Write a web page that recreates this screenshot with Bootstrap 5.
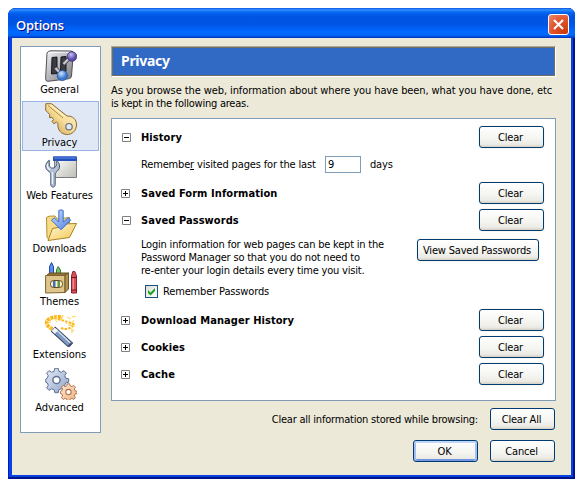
<!DOCTYPE html>
<html lang="en">
<head>
<meta charset="utf-8">
<title>Options</title>
<link href="https://cdn.jsdelivr.net/npm/bootstrap@5.3.0/dist/css/bootstrap.min.css" rel="stylesheet">
<style>
body{font:11px/13px "DejaVu Sans Condensed","DejaVu Sans",sans-serif;color:#000;background:#fff;letter-spacing:-.15px}
.window{width:567px;height:471px;margin:8px;background:#0842e0;border-radius:8px 7px 0 0;overflow:hidden;box-shadow:inset 1px 0 #0019cf,inset -2px 0 #00138c,inset 0 -2px #00138c}
.titlebar{height:30px;padding:3px 6px 0 8px;color:#fff;font:600 13px/16px "Open Sans","Noto Sans",sans-serif;letter-spacing:-.25px;text-shadow:1px 1px #0f1089;background:linear-gradient(#0958e0 0,#3593ff 2px,#1478f8 3px,#0561ee 5px,#0053e2 9px,#0054e6 16px,#0064fb 22px,#016afe 25px,#0060f0 28px,#0440cc 29px,#0038c0 30px)}
.close-btn{width:21px;height:21px;border:1px solid #fff;border-radius:3px;background:radial-gradient(circle at 85% 90%,#cc3a0a,#e2532e 55%,#ee8a6c);padding:0}
.client{margin:0 4px 4px;height:437px;background:#ece9d8;padding:8px 15px 0 8px}
.panes{width:81px;height:387px;background:#fff;border:1px solid #7f9db9;padding:1px;gap:3px}
.pane{height:50px;border:1px solid transparent;padding-top:1px;white-space:nowrap;letter-spacing:-.04px}
.pane span{margin:1px 2px 0 0}
.pane.active{background:#e0e8f6;border-color:#98b4e2}
.main-col{width:445px;margin-left:10px}
.heading-bar{height:31px;background:#316ac5;border:1px solid;border-color:#aca899 #fff #fff #aca899;box-shadow:inset 1px 1px #716f64,inset -1px -1px #716f64;color:#fff;font:700 14px/18px "Noto Sans","Open Sans",sans-serif;padding:0 0 1px 9px;letter-spacing:-.3px}
.intro{margin-top:7px;height:26px;letter-spacing:-.093px;white-space:nowrap}
.intro .l2{letter-spacing:-.24px}
.areas{height:283px;margin-top:8px;background:#fff;border:1px solid #7f9db9;padding:7px 11px 0 9px}
.area-row{height:22px}
.area-row b{margin-left:11px;letter-spacing:.07px}
.area-row.open .toggle{margin-left:1px}
.area-row.open b{margin-left:10px}
.area-row+.area-row{margin-top:5px}
.toggle{width:9px;height:9px;flex:none}
.xp-btn{width:65px;height:22px;border:1px solid #003c74;border-radius:3px;background:linear-gradient(#fff,#f4f4f0 60%,#ecebe5 86%,#d6d0c5);font:inherit;letter-spacing:-.18px;color:#000;padding:0 2px 0 0;line-height:13px;white-space:nowrap;box-shadow:0 0 0 1px #ece9d855}
.xp-btn.default{box-shadow:inset 0 2px #c0d6fb,inset 2px 0 #a5bff0,inset -2px 0 #a5bff0,inset 0 -2px #7396e2}
.wide{width:122px;margin:8px 5px 0 0}
.visits{margin:8px 0 9px 20px;height:17px;letter-spacing:-.16px}
.visits label{width:184px}
.num{width:36px;height:17px;border:1px solid #7f9db9;padding:0 0 0 2px;font:inherit;margin:0 9px 0 0;color:#000;border-radius:0}
.pw{height:78px;padding-left:20px}
.pw p{margin:7px 0 8px;letter-spacing:-.2px;line-height:13px;white-space:nowrap}
.tick{width:13px;height:13px;border:1px solid #1c5180;background:linear-gradient(135deg,#dcdcd7,#fff);margin:0 5px 0 4px}
.clear-all{margin:7px 1px 0 0}.clear-all span{letter-spacing:-.21px;margin-right:12px}
.actions{margin:10px 1px 0 0;gap:12px}
</style>
</head>
<body>
<svg width="0" height="0" class="position-absolute" aria-hidden="true"><defs>
<linearGradient id="steel" x2="1" y2="1"><stop stop-color="#f4f4f6"/><stop offset="1" stop-color="#74767e"/></linearGradient>
<linearGradient id="gold" x1="0" y1="1" x2="1" y2="0"><stop stop-color="#c08f3a"/><stop offset=".5" stop-color="#f6dc98"/><stop offset="1" stop-color="#fff6d4"/></linearGradient>
<linearGradient id="folder" x2="1" y2="1"><stop stop-color="#fffadb"/><stop offset="1" stop-color="#f2c54d"/></linearGradient>
<linearGradient id="sky" x2="1" y2="1"><stop stop-color="#cfe0ff"/><stop offset="1" stop-color="#4a7fe0"/></linearGradient>
<radialGradient id="blueBall" cx=".4" cy=".3"><stop stop-color="#cfe6ff"/><stop offset="1" stop-color="#3c78d4"/></radialGradient>
<radialGradient id="violetBall" cx=".4" cy=".3"><stop stop-color="#c8c0f4"/><stop offset="1" stop-color="#5c4ca8"/></radialGradient>
<linearGradient id="gearBlue" x2="1" y2="1"><stop stop-color="#e4ebf7"/><stop offset="1" stop-color="#8fa3c6"/></linearGradient>
<linearGradient id="gearTan" x2="1" y2="1"><stop stop-color="#ffe8d0"/><stop offset="1" stop-color="#efb083"/></linearGradient>
<linearGradient id="screen" x2="1" y2="1"><stop stop-color="#fff"/><stop offset="1" stop-color="#bdbdb4"/></linearGradient>
</defs></svg>
<div class="window">
  <div class="titlebar d-flex align-items-center justify-content-between"><span>Options</span>
    <button class="close-btn d-flex align-items-center justify-content-center" aria-label="Close"><svg width="13" height="13" viewBox="0 0 13 13"><path d="M2 2l9 9M11 2l-9 9" stroke="#fff" stroke-width="2.1"/></svg></button></div>
  <div class="client d-flex align-items-start">
    <nav class="panes d-flex flex-column">
      <div class="pane d-flex flex-column align-items-center"><svg width="32" height="32" viewBox="0 0 32 32"><path d="M2 3Q3 .8 6 .8L26 1q2.500 0 2.300 2.500L26.500 26q-.3 2.500-3 2.800L3 31.300Q.5 31.500.6 28.500Z" fill="url(#steel)" stroke="#505056"/><path d="M2.800 4Q4 2.300 7 2.300h18" fill="none" stroke="#fff" opacity=".8"/><path d="M7 7.500l5-.5v16.500l-5.500.5zM16 7l5-.5v15l-5.500 1z" fill="#3b3b43" stroke="#17171c"/><path d="M10.500 18l5.500 6M18.500 14l5-5" stroke="#4a4a52" stroke-width="4"/><path d="M10.500 18l5.500 6M18.500 14l5-5" stroke="#c8c8ce" stroke-width="2.200"/><circle cx="27" cy="6.500" r="4.800" fill="url(#violetBall)" stroke="#3e3577" stroke-width=".8"/><circle cx="17.300" cy="25.500" r="5.100" fill="url(#blueBall)" stroke="#24519c" stroke-width=".8"/></svg><span>General</span></div>
      <div class="pane active d-flex flex-column align-items-center"><svg width="32" height="32" viewBox="0 0 32 32"><path d="M.8.7h5.700l15.500 12.300c6-.2 9.700 3.700 9.500 9-.3 5.700-4.300 9.700-9.800 9.500-5.800-.3-9.400-4.800-8.800-11l-1.500-1.700-2.200 2.200-2.200-2.500 1.500-2-1.500-2.200-2.500.4.200-3-2-2.400L.7 7.500z" fill="url(#gold)" stroke="#8a6a2c"/><path d="M3 2.500l15 12.500" stroke="#b58c3c"/><path d="M5.500 2.200L20.500 14" stroke="#fff8da"/><circle cx="24" cy="23.700" r="3.200" fill="#e0e8f6" stroke="#666b78" stroke-width="1.200"/></svg><span>Privacy</span></div>
      <div class="pane d-flex flex-column align-items-center"><svg width="32" height="32" viewBox="0 0 32 32"><path d="M9.500 1.500h22v20h-22z" fill="url(#screen)" stroke="#777b86"/><path d="M8 1.200Q8 .3 9 .3h22q1 0 1 .9V5H8z" fill="#2450bd"/><path d="M9 2h22" stroke="#5c8cea"/><path d="M4.300 4.200C.7 6.300-.2 11 1.600 13.500c1.500 2 3.500 2.200 4.200 4.300v11c.2 3 4.200 3 4.400 0v-11c.7-2.400 3.300-2.800 4.100-5.500.8-3-.4-6.400-3.100-8.200V10L9 12H6.500L4.300 10z" fill="#b2c0d4" stroke="#475771"/><path d="M2.500 8c-.5 3 1 5 3 5.500M7.300 16v12" fill="none" stroke="#f0f5fc" stroke-width="1.200"/></svg><span>Web Features</span></div>
      <div class="pane d-flex flex-column align-items-center"><svg width="32" height="32" viewBox="0 0 32 32"><path d="M1.500 8.500L4 7.200l6-.2 2.500 3 12-1.500v9L5 31l-3-2.500z" fill="#f7dc85" stroke="#b28f36"/><path d="M7.500 19.500l8-1.500 3-3L31.500 14.500 24.500 28.500 3 31.500z" fill="url(#folder)" stroke="#ac8127"/><path d="M13.800 1.500q2.200-1.300 4.400 0V13l5-4.300 2.500 2.500L16 20.800 6.500 11.200l2.500-2.500 4.800 4.300z" fill="url(#sky)" stroke="#3e6fcf"/></svg><span>Downloads</span></div>
      <div class="pane d-flex flex-column align-items-center"><svg width="32" height="32" viewBox="0 0 32 32"><path d="M4.500 14V4.500L6.500 .5 8.500 4.500V14z" fill="#5b8de8" stroke="#1f49a6"/><path d="M11.500 15V8l1.700-3.500L15.500 8v7z" fill="#76c56f" stroke="#2f7e3b"/><path d="M1.500 13.500l3-2.500h19l-3 2.500z" fill="#8e7136" stroke="#66501f"/><path d="M.6 13.500H20v17L.6 31z" fill="#dec58b" stroke="#7e6431"/><path d="M20 13.500l3.500-2.500v16L20 30.500z" fill="#b19352" stroke="#705626"/><rect x="5.500" y="18.500" width="12" height="7" rx="3" fill="#fff0c3" stroke="#614b20"/><path d="M8 19h2.500v6H8z" fill="#416bc0"/><path d="M12.500 19H15v6h-2.500z" fill="#5b9a4e"/><path d="M26.500 31V14l1.300-4.500h2L31.500 14v17z" fill="#d8505a" stroke="#8c222b"/><path d="M26 15.500h6M26 28h6" stroke="#6e1720"/><path d="M28.200 16.500v11" stroke="#f2a1a5"/></svg><span>Themes</span></div>
      <div class="pane d-flex flex-column align-items-center"><svg width="32" height="32" viewBox="0 0 32 32"><g fill="none" stroke="#fbb417"><path d="M7.500 14C2 11.500-.5 7 3.500 4.500c4-2.500 9-3.500 14-2.200" stroke-width="3.600" stroke-dasharray="3 .8"/><path d="M13 4c6 2 12 3 17 6M16 13c5 2 9 .5 12-2" stroke-width="2" stroke-dasharray="2.500 1.200"/><path d="M3 2l3 4M1 9l5-2M4 15l3-4M11 0l1 5M18 0l-2 5M22 2l4 2M27 2l4-1M25 13l4 3M20 6l2 3M27 14v4M29 5l-4 5M9 3l3 4M23 10l7 1" stroke="#ffd047"/></g><path d="M8 14l18 16.500" stroke="#303d59" stroke-width="6.500"/><path d="M8.300 14.300l17.300 15.900" stroke="#7f99c2" stroke-width="4.600"/><path d="M10.300 13.800l16 15" stroke="#d3e0f4" stroke-width="1.300"/><path d="M8.300 14.300l3 2.800" stroke="#f4f7fc" stroke-width="4.400"/><path d="M24.300 29l1.400 1.300" stroke="#3d4f73" stroke-width="4.400"/></svg><span>Extensions</span></div>
      <div class="pane d-flex flex-column align-items-center"><svg width="32" height="32" viewBox="0 0 32 32"><path d="M9.300.8h3.400l.7 3 2.400 1 2.600-1.700 2.500 2.500-1.700 2.600 1 2.400 3 .7v3.400l-3 .7-1 2.400 1.700 2.600-2.500 2.500-2.600-1.700-2.400 1-.7 3H9.300l-.7-3-2.400-1-2.600 1.700-2.500-2.500 1.700-2.600-1-2.400-1.500-.5v-3.400l1.500-.9 1-2.400L1.100 5.600l2.500-2.500 2.600 1.700 2.400-1z" fill="url(#gearBlue)" stroke="#5d7095" transform="translate(.5 -.5)"/><circle cx="11.500" cy="12" r="3.600" fill="#fff" stroke="#62738f" stroke-width="1.500"/><g transform="translate(15.300 15.200) scale(.71)"><path d="M9.800.8h3.400l.7 3 2.400 1 2.600-1.700 2.500 2.500-1.700 2.600 1 2.400 3 .7v3.400l-3 .7-1 2.400 1.700 2.600-2.500 2.500-2.600-1.700-2.400 1-.7 3H9.800l-.7-3-2.400-1-2.600 1.700-2.500-2.500 1.700-2.600-1-2.400-2-.5v-3.400l2-.9 1-2.400L1.600 5.600l2.500-2.500 2.600 1.700 2.400-1z" fill="url(#gearTan)" stroke="#ad7048" stroke-width="1.300"/><circle cx="11.500" cy="12.500" r="3.800" fill="#fff" stroke="#ad7048" stroke-width="1.500"/></g></svg><span>Advanced</span></div>
    </nav>
    <main class="main-col d-flex flex-column">
      <div class="heading-bar d-flex align-items-center">Privacy</div>
      <div class="intro">As you browse the web, information about where you have been, what you have done, etc<br><span class="l2">is kept in the following areas.</span></div>
      <section class="areas">
        <div class="area-row open d-flex align-items-center"><svg class="toggle" viewBox="0 0 9 9"><path d="M.5.5h8v8h-8z" fill="#fff" stroke="#808080"/><path d="M2 4.500h5" stroke="#000"/></svg><b>History</b><button class="xp-btn ms-auto">Clear</button></div>
        <div class="visits d-flex align-items-center"><label for="days">Remembe<u>r</u> visited pages for the last</label><input class="num" id="days" value="9"><span>days</span></div>
        <div class="area-row d-flex align-items-center"><svg class="toggle" viewBox="0 0 9 9"><path d="M.5.5h8v8h-8z" fill="#fff" stroke="#808080"/><path d="M2 4.500h5M4.500 2v5" stroke="#000"/></svg><b>Saved Form Information</b><button class="xp-btn ms-auto">Clear</button></div>
        <div class="area-row open d-flex align-items-center"><svg class="toggle" viewBox="0 0 9 9"><path d="M.5.5h8v8h-8z" fill="#fff" stroke="#808080"/><path d="M2 4.500h5" stroke="#000"/></svg><b>Saved Passwords</b><button class="xp-btn ms-auto">Clear</button></div>
        <div class="pw d-flex justify-content-between align-items-start">
          <div><p>Login information for web pages can be kept in the<br>Password Manager so that you do not need to<br>re-enter your login details every time you visit.</p>
            <div class="d-flex align-items-center"><span class="tick d-flex"><svg width="11" height="11" viewBox="0 0 11 11"><path d="M2 4v3l2.500 2.500L9 5V2L4.500 6.500z" fill="#21a121"/></svg></span><span>Remember Passwords</span></div></div>
          <button class="xp-btn wide">View Saved Passwords</button>
        </div>
        <div class="area-row d-flex align-items-center"><svg class="toggle" viewBox="0 0 9 9"><path d="M.5.5h8v8h-8z" fill="#fff" stroke="#808080"/><path d="M2 4.500h5M4.500 2v5" stroke="#000"/></svg><b>Download Manager History</b><button class="xp-btn ms-auto">Clear</button></div>
        <div class="area-row d-flex align-items-center"><svg class="toggle" viewBox="0 0 9 9"><path d="M.5.5h8v8h-8z" fill="#fff" stroke="#808080"/><path d="M2 4.500h5M4.500 2v5" stroke="#000"/></svg><b>Cookies</b><button class="xp-btn ms-auto">Clear</button></div>
        <div class="area-row d-flex align-items-center"><svg class="toggle" viewBox="0 0 9 9"><path d="M.5.5h8v8h-8z" fill="#fff" stroke="#808080"/><path d="M2 4.500h5M4.500 2v5" stroke="#000"/></svg><b>Cache</b><button class="xp-btn ms-auto">Clear</button></div>
      </section>
      <div class="clear-all d-flex align-items-center justify-content-end"><span>Clear all information stored while browsing:</span><button class="xp-btn">Clear All</button></div>
      <div class="actions d-flex justify-content-end"><button class="xp-btn default">OK</button><button class="xp-btn">Cancel</button></div>
    </main>
  </div>
</div>
<script src="https://cdn.jsdelivr.net/npm/bootstrap@5.3.0/dist/js/bootstrap.bundle.min.js"></script>
</body>
</html>
